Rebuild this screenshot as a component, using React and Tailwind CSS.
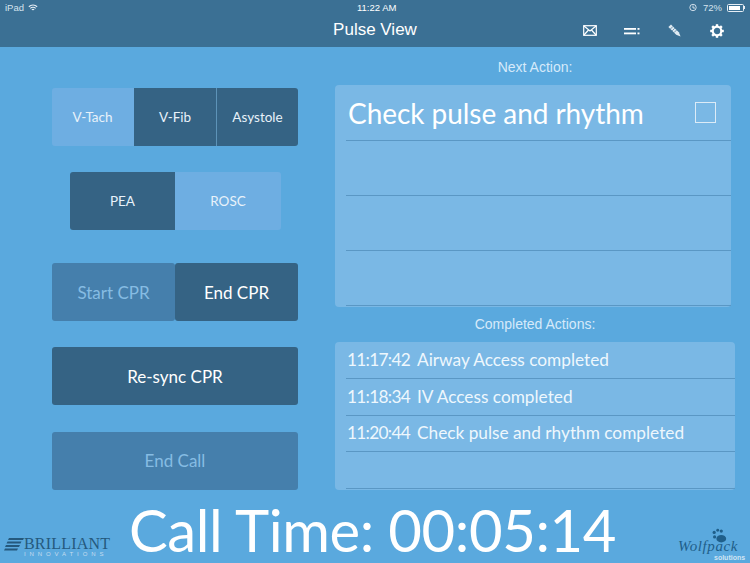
import React from "react";

const sans = "font-['Lato',sans-serif]";
const helv = "font-['Liberation_Sans',sans-serif]";

function StatusBar() {
  return (
    <div className={`relative flex h-[15px] items-center justify-between px-[5px] text-[10px] leading-none text-[#e6eef5] ${helv}`}>
      <div className="flex items-center gap-[4px]">
        <span className="text-[9.5px] text-[#d5e3ee]">iPad</span>
        <svg width="10" height="8" viewBox="0 0 12 9" fill="none" stroke="#e6eef5" strokeWidth="1.3">
          <path d="M1 3a7 7 0 0 1 10 0" />
          <path d="M2.8 5a4.5 4.5 0 0 1 6.4 0" />
          <path d="M4.6 6.8a2 2 0 0 1 2.8 0" />
        </svg>
      </div>
      <span className="absolute left-[357px] top-[3px] text-[9.5px] text-white">11:22 AM</span>
      <div className="flex items-center gap-[5px]">
        <svg width="9" height="9" viewBox="0 0 9 9" fill="none" stroke="#dbe7f0" strokeWidth="0.9">
          <circle cx="4" cy="4.5" r="3.2" />
          <path d="M4 2.5v2.5h2" />
        </svg>
        <span className="text-[9.5px] text-[#d5e3ee]">72%</span>
        <span className="flex items-center">
          <span className="flex h-[8px] w-[17px] rounded-[1.5px] border border-[#e6eef5] p-[1px]">
            <span className="h-full w-[11px] bg-white" />
          </span>
          <span className="h-[3px] w-[1px] bg-[#e6eef5]" />
        </span>
      </div>
    </div>
  );
}

function Mail() {
  return (
    <svg width="14" height="11" viewBox="0 0 14 11" fill="none" stroke="#ffffff" strokeWidth="1.2">
      <rect x="0.7" y="0.7" width="12.6" height="9.6" />
      <path d="M1 1l6 5 6-5M1 10l4.5-5M13 10L8.5 5" />
    </svg>
  );
}

function ListIcon() {
  return (
    <svg width="16" height="8" viewBox="0 0 16 8" fill="#ffffff">
      <rect x="0" y="1" width="12" height="1.8" />
      <rect x="0" y="5.5" width="12" height="1.8" />
      <rect x="13.5" y="1" width="2" height="1.8" />
      <rect x="13.5" y="5.5" width="2" height="1.8" />
    </svg>
  );
}

function Pencil() {
  return (
    <svg width="13" height="13" viewBox="0 0 13 13">
      <path d="M0.4 3L3 0.4 10.8 8.2 12.6 12.6 8.2 10.8z" fill="#dfeaf2" />
      <path d="M2.4 5L5 2.4M4.2 6.8L6.8 4.2M6 8.6L8.6 6" stroke="#3b7094" strokeWidth="0.7" fill="none" />
    </svg>
  );
}

function Gear() {
  const teeth = [0, 45, 90, 135, 180, 225, 270, 315];
  return (
    <svg width="14" height="14" viewBox="0 0 14 14">
      <circle cx="7" cy="7" r="4.3" fill="none" stroke="#ffffff" strokeWidth="2.2" />
      {teeth.map((a) => (
        <rect key={a} x="5.8" y="0.2" width="2.4" height="2.4" fill="#ffffff" transform={`rotate(${a} 7 7)`} />
      ))}
    </svg>
  );
}

function Header() {
  return (
    <header className="h-[47px] bg-[#3b7094]">
      <StatusBar />
      <div className={`relative flex h-[32px] items-center justify-center pb-[4px] text-[17px] leading-none text-white ${helv}`}>
        <span>Pulse View</span>
        <div className="absolute left-[583px] top-[8px] flex h-[15px] items-center">
          <span className="w-[41px]"><Mail /></span>
          <span className="w-[44px]"><ListIcon /></span>
          <span className="w-[42px]"><Pencil /></span>
          <span><Gear /></span>
        </div>
      </div>
    </header>
  );
}

const btn = "flex items-center justify-center";

function LeftColumn() {
  return (
    <div className={`ml-[52px] flex w-[246px] flex-col pt-[41px] ${sans}`}>
      <div className="flex h-[58px] overflow-hidden rounded-[3px] text-[13.5px] text-[#e8f2fa]">
        <div className={`${btn} w-[82px] bg-[#6eaee2] pr-[1px]`}>V-Tach</div>
        <div className={`${btn} w-[82px] bg-[#356384]`}>V-Fib</div>
        <div className={`${btn} flex-1 border-l border-[#5d93b8] bg-[#356384]`}>Asystole</div>
      </div>
      <div className="mx-[18px] mt-[26px] flex h-[58px] w-[211px] overflow-hidden rounded-[3px] text-[13.5px] text-[#e8f2fa]">
        <div className={`${btn} w-[105px] bg-[#356384]`}>PEA</div>
        <div className={`${btn} flex-1 bg-[#6eaee2]`}>ROSC</div>
      </div>
      <div className="mt-[33px] flex h-[58px] text-[17px]">
        <div className={`${btn} w-[123px] rounded-[3px] bg-[#457fac] pt-[1px] text-[#86bce3]`}>Start CPR</div>
        <div className={`${btn} flex-1 rounded-[3px] bg-[#356384] pt-[1px] text-white`}>End CPR</div>
      </div>
      <div className={`${btn} mt-[26px] h-[58px] rounded-[3px] bg-[#356384] pt-[1px] text-[17px] text-white`}>Re-sync CPR</div>
      <div className={`${btn} mt-[27px] h-[58px] rounded-[3px] bg-[#457fac] text-[17px] text-[#86bce3]`}>End Call</div>
    </div>
  );
}

function Checkbox() {
  return <span className="h-[21px] w-[21px] border border-[#dcebf7]" />;
}

function RightColumn() {
  return (
    <div className="ml-[37px] flex w-[400px] flex-col">
      <div className={`flex h-[38px] w-[400px] items-center justify-center pt-[3px] text-[14px] text-[#d6eafa] ${helv}`}>Next Action:</div>
      <div className={`flex h-[222px] w-[396px] flex-col rounded-[4px] bg-[#7ab8e5] pl-[11px] ${sans}`}>
        <div className="flex h-[56px] items-center justify-between border-b border-[#5a97c4] pr-[15px] pl-[2px] text-[28px] tracking-[-0.05px] text-white">
          <span>Check pulse and rhythm</span>
          <Checkbox />
        </div>
        <div className="h-[55px] border-b border-[#5a97c4]" />
        <div className="h-[55px] border-b border-[#5a97c4]" />
        <div className="h-[55px] border-b border-[#5a97c4]" />
      </div>
      <div className={`flex h-[35px] w-[400px] items-center justify-center text-[14px] text-[#d6eafa] ${helv}`}>Completed Actions:</div>
      <div className={`flex h-[148px] flex-col rounded-[4px] bg-[#7ab8e5] pl-[11px] text-[17.25px] text-[#eef7fd] ${sans}`}>
        {[
          ["11:17:42", "Airway Access completed"],
          ["11:18:34", "IV Access completed"],
          ["11:20:44", "Check pulse and rhythm completed"],
          ["", ""],
        ].map(([t, s], i) => (
          <div key={i} className="flex h-[36.75px] shrink-0 items-center gap-[7px] border-b border-[#5a97c4] pl-[1px]">
            <span className="w-[63px] tracking-[-0.7px]">{t}</span>
            <span>{s}</span>
          </div>
        ))}
      </div>
    </div>
  );
}

function Brilliant() {
  return (
    <div className="flex w-[106px] items-start">
      <svg width="20" height="16" viewBox="0 0 20 16" className="mt-[1px] shrink-0" fill="#25597d">
        <path d="M5 0h15l-1 2H4z" />
        <path d="M3.5 3.5h14l-1 2h-14z" />
        <path d="M2 7h14l-1 2H1z" />
        <path d="M1 10.5h13l-1 2H0z" />
      </svg>
      <div className="flex flex-col items-start">
        <span className="font-['Liberation_Serif',serif] text-[16px] leading-[14px] tracking-[0.2px] text-[#25597d]">BRILLIANT</span>
        <span className={`text-[6px] leading-[7px] tracking-[3.9px] text-[#c5dcee] ${helv}`}>INNOVATIONS</span>
      </div>
    </div>
  );
}

function Wolfpack() {
  return (
    <div className="relative h-[34px] w-[70px]">
      <svg width="17" height="16" viewBox="0 0 18 18" className="absolute left-[33px] top-0" fill="#1f5f8a">
        <ellipse cx="11" cy="12" rx="5.5" ry="4.2" />
        <circle cx="3" cy="5" r="1.8" />
        <circle cx="7" cy="2.5" r="1.6" />
        <circle cx="11" cy="3.5" r="1.8" />
        <circle cx="3.5" cy="10" r="1.8" />
      </svg>
      <span className="absolute left-0 top-[11px] font-['Liberation_Serif',serif] text-[15px] italic leading-none tracking-[0.6px] text-[#1f5f8a]">Wolfpack</span>
      <span className={`absolute left-[36px] top-[26px] text-[7px] font-bold leading-none text-[#cfe4f3] ${helv}`}>solutions</span>
    </div>
  );
}

function Footer() {
  return (
    <div className="mt-[6px] flex h-[62px] items-end justify-between pl-[4px] pr-[2px]">
      <div className="pb-[5px]"><Brilliant /></div>
      <div className={`-ml-[43px] flex h-full items-start text-[58px] leading-[58px] tracking-[-0.4px] text-white ${sans}`}>Call Time: 00:05:14</div>
      <div className="pb-[1px]"><Wolfpack /></div>
    </div>
  );
}

export default function App() {
  return (
    <div className="flex h-[563px] w-[750px] flex-col overflow-hidden bg-[#5aa9de]">
      <Header />
      <div className="flex h-[448px]">
        <LeftColumn />
        <RightColumn />
      </div>
      <Footer />
    </div>
  );
}
